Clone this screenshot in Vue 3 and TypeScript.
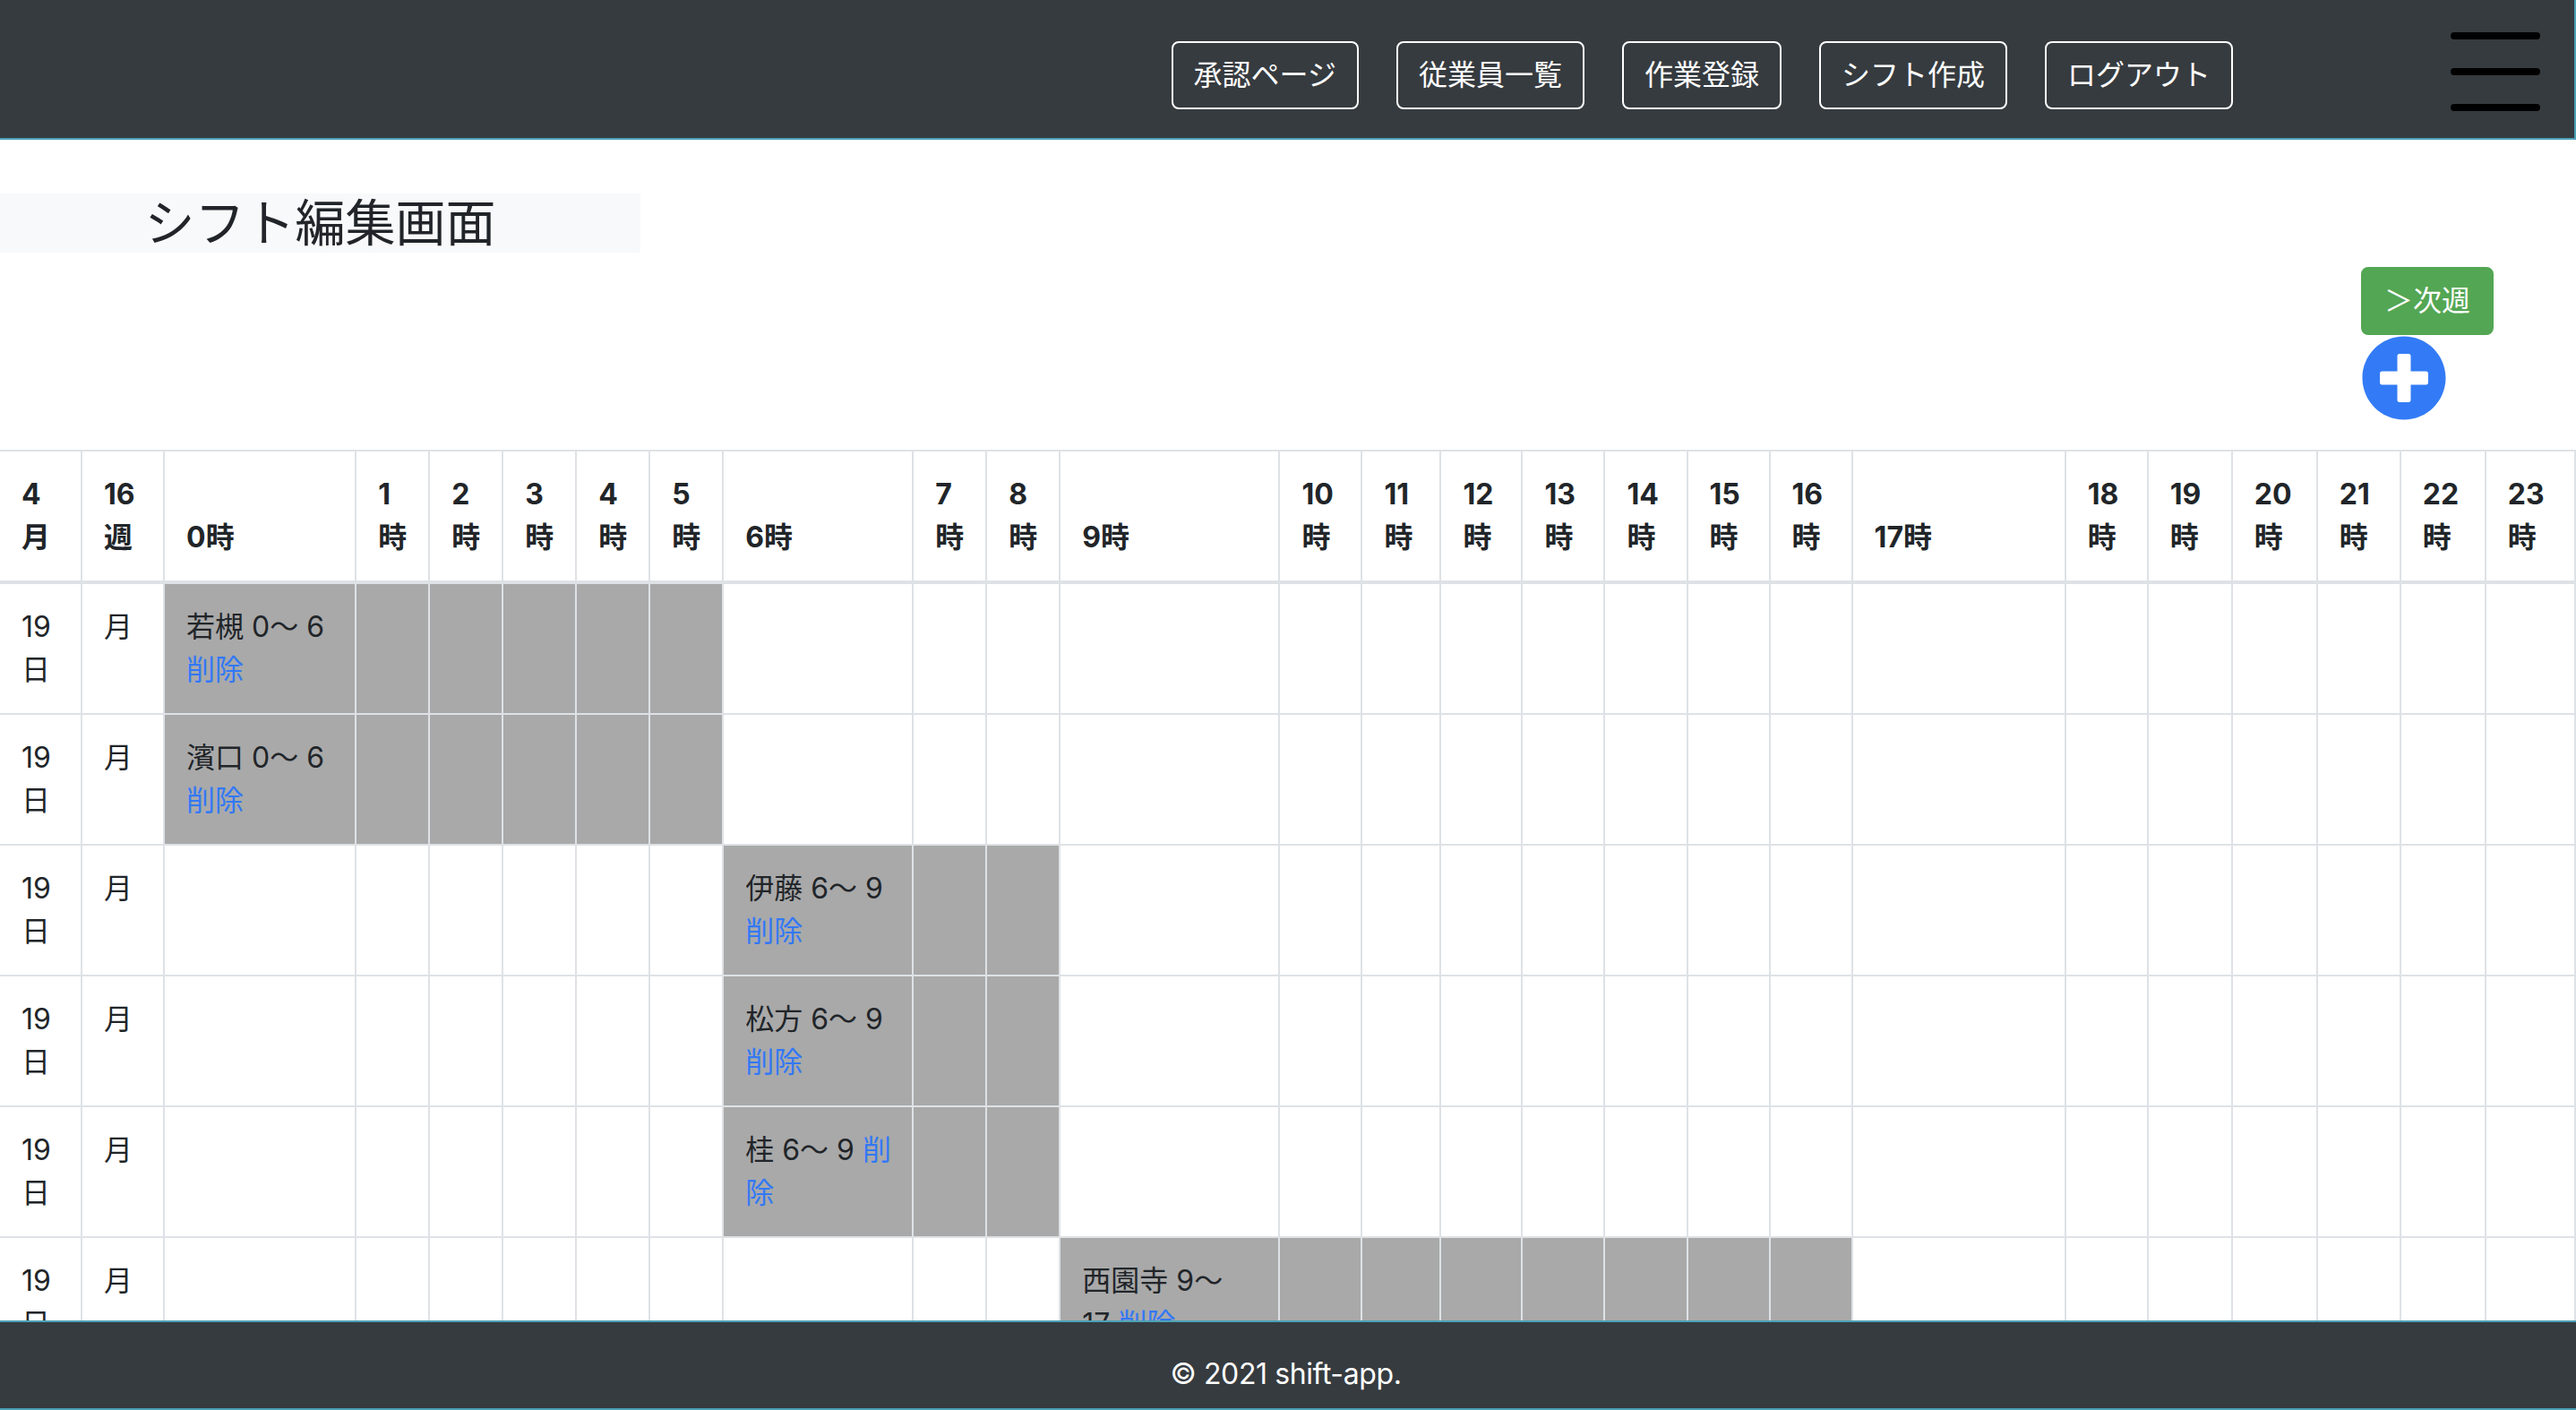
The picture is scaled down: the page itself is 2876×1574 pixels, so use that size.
<template>
  <div class="page">
    <!-- Header -->
    <nav class="navbar">
      <div class="nav-links">
        <a v-for="link in navLinks" :key="link" class="nav-btn" href="#">{{ link }}</a>
      </div>
      <div class="hamburger">
        <span></span>
        <span></span>
        <span></span>
      </div>
    </nav>

    <main class="content">
      <h3 class="page-title">シフト編集画面</h3>

      <div class="actions">
        <div class="actions-inner">
          <a class="next-btn" href="#">＞次週</a>
          <a class="add-btn" href="#">
            <svg viewBox="0 0 512 512" width="96" height="96">
              <path fill="#337bf6" d="M256 8C119 8 8 119 8 256s111 248 248 248 248-111 248-248S393 8 256 8zm144 276c0 6.6-5.4 12-12 12h-92v92c0 6.6-5.4 12-12 12h-56c-6.6 0-12-5.4-12-12v-92h-92c-6.6 0-12-5.4-12-12v-56c0-6.6 5.4-12 12-12h92v-92c0-6.6 5.4-12 12-12h56c6.6 0 12 5.4 12 12v92h92c6.6 0 12 5.4 12 12v56z" />
            </svg>
          </a>
        </div>
      </div>

      <!-- Shift table -->
      <table class="shift-table">
        <colgroup>
          <col v-for="(w, i) in colWidths" :key="i" :style="{ width: w + 'px' }" />
        </colgroup>
        <thead>
          <tr>
            <th>4月</th>
            <th>16週</th>
            <th v-for="h in hours" :key="h">{{ h }}時</th>
          </tr>
        </thead>
        <tbody>
          <tr v-for="shift in shifts" :key="shift.name">
            <td>19日</td>
            <td>月</td>
            <td v-for="h in hours" :key="h" :class="{ filled: h >= shift.start && h < shift.end }">
              <template v-if="h === shift.start">
                {{ shift.name }} {{ shift.start }}〜 {{ shift.end }}
                <a class="delete-link" href="#">削除</a>
              </template>
            </td>
          </tr>
        </tbody>
      </table>
    </main>

    <footer class="footer">© 2021 shift-app.</footer>
  </div>
</template>

<script setup lang="ts">
type Shift = {
  name: string
  start: number
  end: number
}

const navLinks: string[] = ['承認ページ', '従業員一覧', '作業登録', 'シフト作成', 'ログアウト']

const hours: number[] = Array.from({ length: 24 }, (_, i) => i)

// month, week, then 0時 - 23時
const colWidths: number[] = [
  92, 92, 214, 82, 82, 82, 82, 82, 212, 82, 82, 245, 92, 88, 91, 92, 92, 92, 92, 238, 92, 94, 95, 93, 95, 100,
]

const shifts: Shift[] = [
  { name: '若槻', start: 0, end: 6 },
  { name: '濱口', start: 0, end: 6 },
  { name: '伊藤', start: 6, end: 9 },
  { name: '松方', start: 6, end: 9 },
  { name: '桂', start: 6, end: 9 },
  { name: '西園寺', start: 9, end: 17 },
]
</script>

<style scoped>
.page {
  height: 100vh;
  display: flex;
  flex-direction: column;
  overflow: hidden;
  font-family: Inter, "Noto Sans CJK JP", sans-serif;
  font-size: 32px;
  line-height: 48px;
  color: #212529;
}

.navbar {
  flex: 0 0 156px;
  box-sizing: border-box;
  display: flex;
  justify-content: flex-end;
  align-items: flex-start;
  padding: 36px 38px 0 0;
  background-color: #363b3f;
  border-right: 2px solid #4ba1b5;
  border-bottom: 2px solid #4ba1b5;
}

.nav-links {
  display: flex;
  gap: 42px;
  margin-top: 10px;
  margin-right: 243px;
}

.nav-btn {
  padding: 12px 23px;
  border: 2px solid #fff;
  border-radius: 8px;
  color: #fff;
  text-decoration: none;
}

.hamburger {
  display: flex;
  flex-direction: column;
  gap: 32px;
  width: 100px;
}

.hamburger span {
  height: 8px;
  border-radius: 4px;
  background-color: #000;
}

.content {
  flex: 1;
  min-height: 0;
  overflow: hidden;
}

.page-title {
  width: 715px;
  height: 66px;
  margin: 60px 0 0;
  background-color: #f8f9fa;
  font-size: 56px;
  font-weight: 400;
  line-height: 66px;
  text-align: center;
}

.actions {
  display: flex;
  justify-content: flex-end;
  margin: 16px 92px 0 0;
}

.actions-inner {
  display: flex;
  flex-direction: column;
  align-items: flex-start;
  width: 148px;
}

.next-btn {
  padding: 12px 24px;
  border: 2px solid #53a653;
  border-radius: 8px;
  background-color: #53a653;
  color: #fff;
  text-decoration: none;
}

.add-btn {
  display: block;
  height: 96px;
  margin-bottom: 32px;
}

.add-btn svg {
  display: block;
}

/* left outer border sits just off the page */
.shift-table {
  width: 2878px;
  margin-left: -2px;
  table-layout: fixed;
  border-collapse: collapse;
}

.shift-table th,
.shift-table td {
  padding: 24px;
  border: 2px solid #dee2e6;
  text-align: left;
}

.shift-table th {
  vertical-align: bottom;
  border-bottom-width: 4px;
  font-weight: 700;
}

.shift-table td {
  padding-right: 23px;
  vertical-align: top;
}

.shift-table td.filled {
  background-color: #a9a9a9;
}

.delete-link {
  color: #3278f6;
  text-decoration: none;
}

.footer {
  flex: 0 0 100px;
  box-sizing: border-box;
  padding: 34px 5px 0 0;
  background-color: #363b3f;
  border-top: 2px solid #4ba1b5;
  border-bottom: 2px solid #4ba1b5;
  color: #fff;
  letter-spacing: -0.4px;
  text-align: center;
}
</style>
